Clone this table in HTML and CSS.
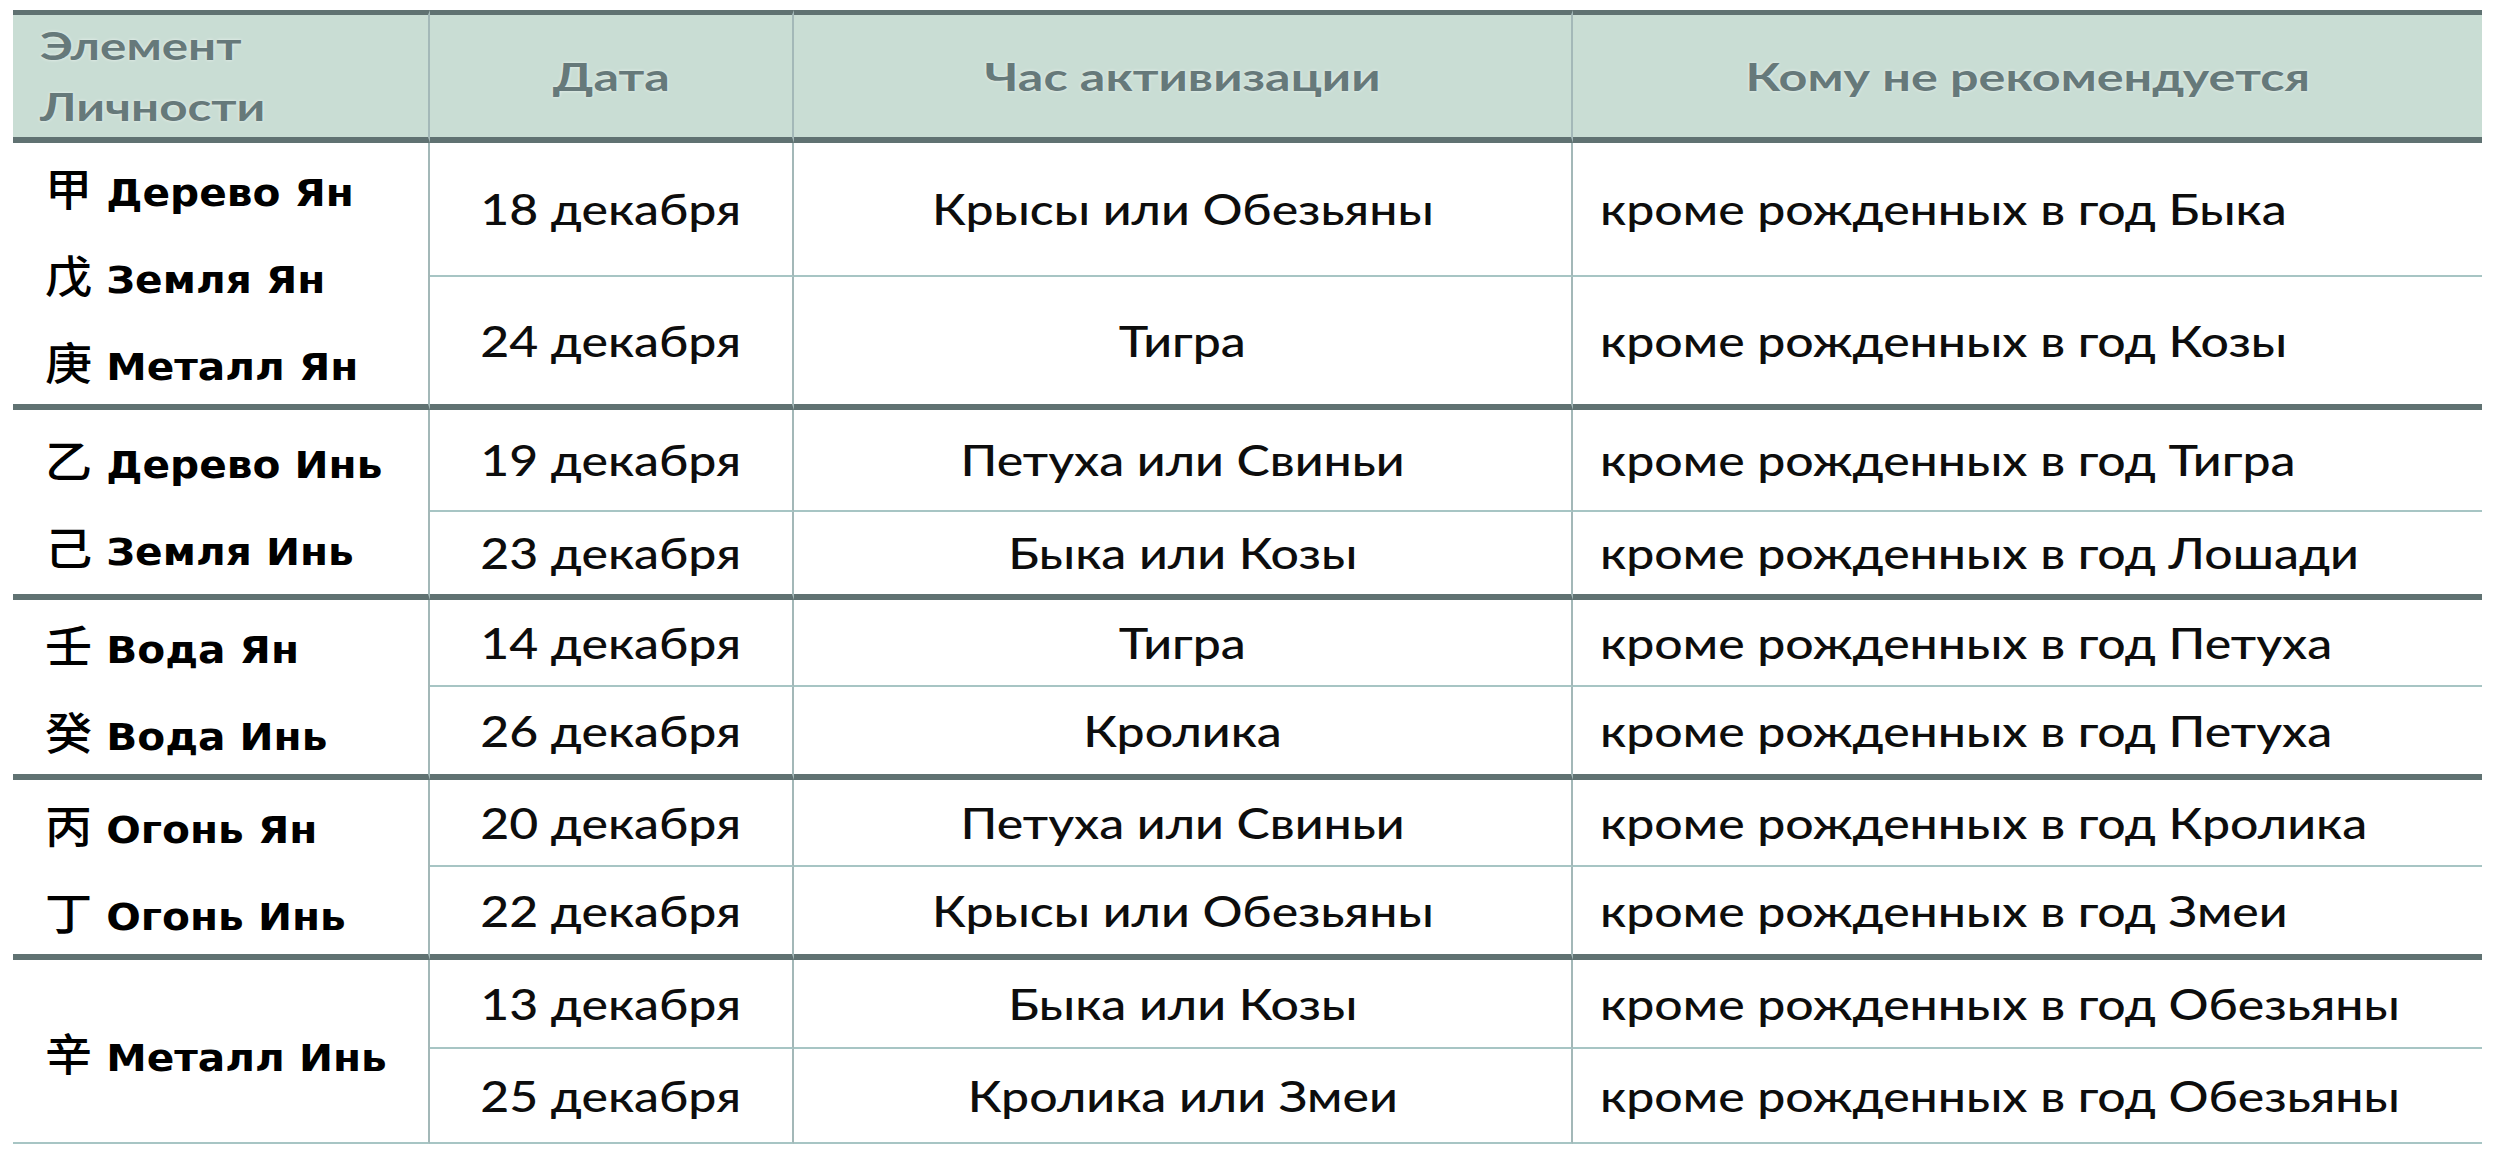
FILE: index.html
```html
<!DOCTYPE html>
<html lang="ru">
<head>
<meta charset="utf-8">
<title>Элементы личности</title>
<link rel="stylesheet" href="styles.css">
</head>
<body>
<div class="page">
  <div class="grid">
    <div class="cell hd first vr"><div class="hlines"><span class="hl">Элемент</span><span class="hl">Личности</span></div></div>
    <div class="cell hd vr"><span class="ht">Дата</span></div>
    <div class="cell hd vr"><span class="ht">Час активизации</span></div>
    <div class="cell hd"><span class="ht">Кому не рекомендуется</span></div>

    <div class="cell el vr thick"><div class="el-lines"><span class="el-line"><span class="cjk">甲</span> Дерево Ян</span><span class="el-line"><span class="cjk">戊</span> Земля Ян</span><span class="el-line"><span class="cjk">庚</span> Металл Ян</span></div></div>
    <div class="cell d vr thin"><span class="dt">18 декабря</span></div>
    <div class="cell d vr thin"><span class="dt">Крысы или Обезьяны</span></div>
    <div class="cell d left thin"><span class="dt">кроме рожденных в год Быка</span></div>
    <div class="cell d vr thick"><span class="dt">24 декабря</span></div>
    <div class="cell d vr thick"><span class="dt">Тигра</span></div>
    <div class="cell d left thick"><span class="dt">кроме рожденных в год Козы</span></div>

    <div class="cell el vr thick"><div class="el-lines"><span class="el-line"><span class="cjk">乙</span> Дерево Инь</span><span class="el-line"><span class="cjk">己</span> Земля Инь</span></div></div>
    <div class="cell d vr thin"><span class="dt">19 декабря</span></div>
    <div class="cell d vr thin"><span class="dt">Петуха или Свиньи</span></div>
    <div class="cell d left thin"><span class="dt">кроме рожденных в год Тигра</span></div>
    <div class="cell d vr thick"><span class="dt">23 декабря</span></div>
    <div class="cell d vr thick"><span class="dt">Быка или Козы</span></div>
    <div class="cell d left thick"><span class="dt">кроме рожденных в год Лошади</span></div>

    <div class="cell el vr thick"><div class="el-lines"><span class="el-line"><span class="cjk">壬</span> Вода Ян</span><span class="el-line"><span class="cjk">癸</span> Вода Инь</span></div></div>
    <div class="cell d vr thin"><span class="dt">14 декабря</span></div>
    <div class="cell d vr thin"><span class="dt">Тигра</span></div>
    <div class="cell d left thin"><span class="dt">кроме рожденных в год Петуха</span></div>
    <div class="cell d vr thick"><span class="dt">26 декабря</span></div>
    <div class="cell d vr thick"><span class="dt">Кролика</span></div>
    <div class="cell d left thick"><span class="dt">кроме рожденных в год Петуха</span></div>

    <div class="cell el vr thick"><div class="el-lines"><span class="el-line"><span class="cjk">丙</span> Огонь Ян</span><span class="el-line"><span class="cjk">丁</span> Огонь Инь</span></div></div>
    <div class="cell d vr thin"><span class="dt">20 декабря</span></div>
    <div class="cell d vr thin"><span class="dt">Петуха или Свиньи</span></div>
    <div class="cell d left thin"><span class="dt">кроме рожденных в год Кролика</span></div>
    <div class="cell d vr thick"><span class="dt">22 декабря</span></div>
    <div class="cell d vr thick"><span class="dt">Крысы или Обезьяны</span></div>
    <div class="cell d left thick"><span class="dt">кроме рожденных в год Змеи</span></div>

    <div class="cell el vr thin"><div class="el-lines"><span class="el-line"><span class="cjk">辛</span> Металл Инь</span></div></div>
    <div class="cell d vr thin"><span class="dt">13 декабря</span></div>
    <div class="cell d vr thin"><span class="dt">Быка или Козы</span></div>
    <div class="cell d left thin"><span class="dt">кроме рожденных в год Обезьяны</span></div>
    <div class="cell d vr thin"><span class="dt">25 декабря</span></div>
    <div class="cell d vr thin"><span class="dt">Кролика или Змеи</span></div>
    <div class="cell d left thin"><span class="dt">кроме рожденных в год Обезьяны</span></div>
  </div>
</div>
</body>
</html>
```

FILE: styles.css
```css
body {
  margin: 0;
  background: #ffffff;
}

.page {
  padding: 10px 13px 0 13px;
}

.grid {
  display: grid;
  grid-template-columns: 417px 364px 779px 909px;
  grid-template-rows: 133px 134px 133px 102px 88px 87px 93px 87px 93px 89px 95px;
}

.cell {
  box-sizing: border-box;
  display: flex;
  align-items: center;
  min-width: 0;
}

.vr {
  border-right: 2px solid #a3b8b8;
}

.hd {
  background: #c9ddd4;
  border-top: 5px solid #607272;
  border-bottom: 6px solid #607272;
  color: #66797a;
  font-family: Lato, "Liberation Sans", sans-serif;
  font-weight: 700;
  font-size: 39px;
  justify-content: center;
}

.hd.first {
  justify-content: flex-start;
  padding-left: 27px;
}

.hlines {
  transform: scaleX(1.265);
  transform-origin: left center;
}

.hl {
  display: block;
  line-height: 61px;
  width: max-content;
  text-shadow: 0 0 3px rgba(255, 255, 255, 0.7);
}

.ht {
  display: inline-block;
  white-space: nowrap;
  transform: scaleX(1.29);
  text-shadow: 0 0 3px rgba(255, 255, 255, 0.7);
}

.d {
  font-family: Lato, "Liberation Sans", sans-serif;
  font-size: 42px;
  font-weight: 500;
  color: #0d0d0d;
  justify-content: center;
}

.d.left {
  justify-content: flex-start;
  padding-left: 27px;
}

.dt {
  display: inline-block;
  white-space: nowrap;
  transform: scaleX(1.19);
}

.left .dt {
  transform-origin: left center;
}

.thin {
  border-bottom: 2px solid #a7c5c4;
}

.thick {
  border-bottom: 6px solid #607272;
}

.el {
  grid-row: span 2;
  padding-left: 32px;
  padding-top: 14px;
  font-family: "DejaVu Sans", sans-serif;
  font-weight: 700;
  font-size: 38px;
  color: #000000;
}

.el-lines {
  transform: scaleX(1.07);
  transform-origin: left center;
}

.el-line {
  display: block;
  line-height: 87px;
  white-space: nowrap;
}

.cjk {
  font-family: "Noto Sans CJK SC", sans-serif;
  font-weight: 500;
  font-size: 44px;
  line-height: 1;
}
```
